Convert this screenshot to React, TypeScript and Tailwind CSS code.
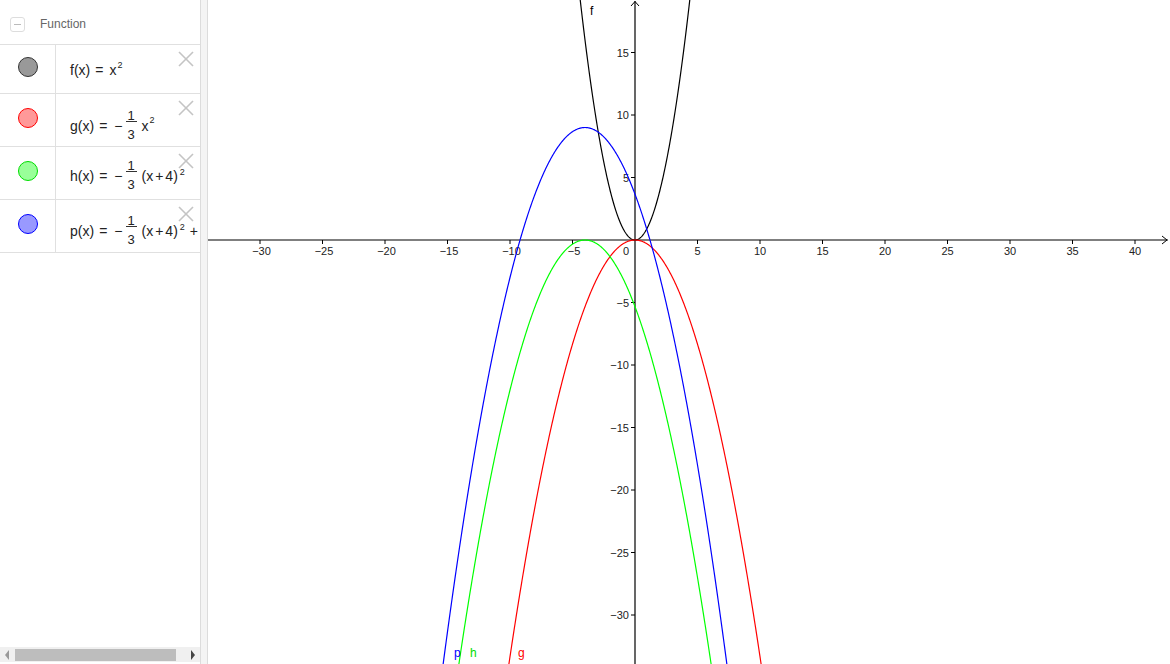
import React from "react";

const S = 12.5;
const OX = 427;
const OY = 240;
const W = 962;
const H = 664;

function curvePath(fn: (x: number) => number): string {
  const pts: string[] = [];
  for (let px = 0; px <= W; px += 0.5) {
    const x = (px - OX) / S;
    const py = OY - fn(x) * S;
    if (py < -40 || py > H + 40) {
      continue;
    }
    pts.push(`${pts.length === 0 ? "M" : "L"}${px.toFixed(2)},${py.toFixed(2)}`);
  }
  return pts.join(" ");
}

function Graph() {
  const xt: number[] = [];
  for (let k = -30; k <= 40; k += 5) if (k !== 0) xt.push(k);
  const yt: number[] = [];
  for (let k = -30; k <= 15; k += 5) if (k !== 0) yt.push(k);
  const font = '"Liberation Sans", Arial, sans-serif';
  return (
    <svg width={W} height={H} viewBox={`0 0 ${W} ${H}`} className="block">
      <line x1={0} y1={OY} x2={W - 2} y2={OY} stroke="#000" strokeWidth={1.2} />
      <polyline points={`${W - 8},${OY - 4} ${W - 3},${OY} ${W - 8},${OY + 4}`} fill="none" stroke="#000" strokeWidth={1} />
      <line x1={OX} y1={1} x2={OX} y2={H} stroke="#000" strokeWidth={1.2} />
      <polyline points={`${OX - 4},${6} ${OX},${1.5} ${OX + 4},${6}`} fill="none" stroke="#000" strokeWidth={1} />
      {xt.map((k) => {
        const x = OX + k * S;
        return (
          <g key={`x${k}`}>
            <line x1={x} y1={OY} x2={x} y2={OY + 4} stroke="#000" strokeWidth={1} />
            <text x={k < 0 ? x + 1.5 : x} y={OY + 15} fontSize={11} fontFamily={font} textAnchor="middle" fill="#222">
              {k < 0 ? `\u2212${-k}` : `${k}`}
            </text>
          </g>
        );
      })}
      {yt.map((k) => {
        const y = OY - k * S;
        return (
          <g key={`y${k}`}>
            <line x1={OX - 4} y1={y} x2={OX} y2={y} stroke="#000" strokeWidth={1} />
            <text x={OX - 6} y={y + 4} fontSize={11} fontFamily={font} textAnchor="end" fill="#222">
              {k < 0 ? `\u2212${-k}` : `${k}`}
            </text>
          </g>
        );
      })}
      <text x={OX - 9} y={OY + 15} fontSize={11} fontFamily={font} textAnchor="middle" fill="#222">0</text>
      <path d={curvePath((x) => x * x)} fill="none" stroke="#000" strokeWidth={1.2} />
      <path d={curvePath((x) => -(x * x) / 3)} fill="none" stroke="#ff0000" strokeWidth={1.2} />
      <path d={curvePath((x) => -((x + 4) * (x + 4)) / 3)} fill="none" stroke="#00ff00" strokeWidth={1.2} />
      <path d={curvePath((x) => -((x + 4) * (x + 4)) / 3 + 9)} fill="none" stroke="#0000ff" strokeWidth={1.2} />
      <text x={382} y={15} fontSize={12} fontFamily={font} fill="#000">f</text>
      <text x={246} y={657} fontSize={12} fontFamily={font} fill="#0000ff">p</text>
      <text x={262} y={657} fontSize={12} fontFamily={font} fill="#00dd00">h</text>
      <text x={310} y={657} fontSize={12} fontFamily={font} fill="#ff0000">g</text>
    </svg>
  );
}

function XIcon() {
  return (
    <svg width={16} height={16} viewBox="0 0 16 16" className="absolute top-[6px] left-[122px]">
      <line x1={1} y1={1} x2={15} y2={15} stroke="#c4c4c4" strokeWidth={1.6} />
      <line x1={15} y1={1} x2={1} y2={15} stroke="#c4c4c4" strokeWidth={1.6} />
    </svg>
  );
}

function Frac() {
  return (
    <span className="inline-flex flex-col items-center mx-[3px]">
      <span className="leading-[11px] text-[13px]">1</span>
      <span className="h-px w-[11px] bg-[#333]" />
      <span className="pt-[6px] leading-[14px] text-[13px]">3</span>
    </span>
  );
}

function Sup({ hi }: { hi?: boolean }) {
  return <span className={hi ? "text-[9px] relative top-[-3px] ml-[2px]" : "text-[9px] relative top-[-5px] ml-[1px]"}>2</span>;
}

function Paren() {
  return (
    <span className="ml-[2px] flex items-center">
      <span>(x</span>
      <span className="mx-[2px]">+</span>
      <span>4)</span>
    </span>
  );
}

function Row({
  color,
  fill,
  h,
  circleTop,
  textTop,
  children,
}: {
  color: string;
  fill: string;
  h: string;
  circleTop: string;
  textTop: string;
  children: React.ReactNode;
}) {
  return (
    <div className={`flex border-b border-[#e0e0e0] ${h}`}>
      <div className={`w-[56px] shrink-0 border-r border-[#e0e0e0] flex justify-center ${circleTop}`}>
        <div className="w-[20px] h-[20px] rounded-full border" style={{ borderColor: color, backgroundColor: fill }} />
      </div>
      <div className={`relative flex-1 overflow-hidden pl-[14px] ${textTop}`}>
        <div className="flex items-center whitespace-nowrap text-[14px] text-[#222]">{children}</div>
        <XIcon />
      </div>
    </div>
  );
}

export default function App() {
  return (
    <div className="flex w-[1170px] h-[664px] bg-white overflow-hidden" style={{ fontFamily: '"Liberation Sans", Arial, sans-serif' }}>
      <div className="w-[201px] shrink-0 border-r border-[#dcdcdc] flex flex-col">
        <div className="h-[45px] border-b border-[#e0e0e0] flex items-center pl-[10px] pt-[4px] shrink-0">
          <div className="w-[15px] h-[15px] border border-[#dddddd] rounded-[3px] flex items-center justify-center">
            <div className="w-[7px] h-px bg-[#bbbbbb]" />
          </div>
          <span className="ml-[15px] text-[12px] text-[#666666]">Function</span>
        </div>
        <Row color="#333333" fill="#999999" h="h-[49px]" circleTop="pt-[12px]" textTop="pt-[15px]">
          <span>f(x)</span>
          <span className="ml-[5px]">=</span>
          <span className="ml-[6px]">x</span>
          <Sup />
        </Row>
        <Row color="#ff0000" fill="#ff9999" h="h-[53px]" circleTop="pt-[14px]" textTop="pt-[16px]">
          <span>g(x)</span>
          <span className="ml-[5px]">=</span>
          <span className="ml-[7px]">−</span>
          <Frac />
          <span className="ml-[2px]">x</span>
          <Sup />
        </Row>
        <Row color="#00dd00" fill="#99ff99" h="h-[53px]" circleTop="pt-[14px]" textTop="pt-[13px]">
          <span>h(x)</span>
          <span className="ml-[5px]">=</span>
          <span className="ml-[7px]">−</span>
          <Frac />
          <Paren />
          <Sup hi />
        </Row>
        <Row color="#0000ff" fill="#9999ff" h="h-[53px]" circleTop="pt-[14px]" textTop="pt-[15px]">
          <span>p(x)</span>
          <span className="ml-[5px]">=</span>
          <span className="ml-[7px]">−</span>
          <Frac />
          <Paren />
          <Sup hi />
          <span className="ml-[5px]">+</span>
          <span className="ml-[3px]">9</span>
        </Row>
        <div className="flex-1" />
        <div className="h-[15px] mb-[2px] bg-[#f0f0f0] flex items-center shrink-0">
          <div className="w-0 h-0 ml-[5px] border-y-[5px] border-y-transparent border-r-[4px] border-r-[#9a9a9a]" />
          <div className="ml-[6px] w-[161px] h-[12px] bg-[#bdbdbd]" />
          <div className="w-0 h-0 ml-[15px] border-y-[5px] border-y-transparent border-l-[4px] border-l-[#444444]" />
        </div>
      </div>
      <div className="w-[7px] shrink-0 bg-[#f4f4f4] border-r border-[#dcdcdc]" />
      <div className="flex-1 relative">
        <Graph />
      </div>
    </div>
  );
}
